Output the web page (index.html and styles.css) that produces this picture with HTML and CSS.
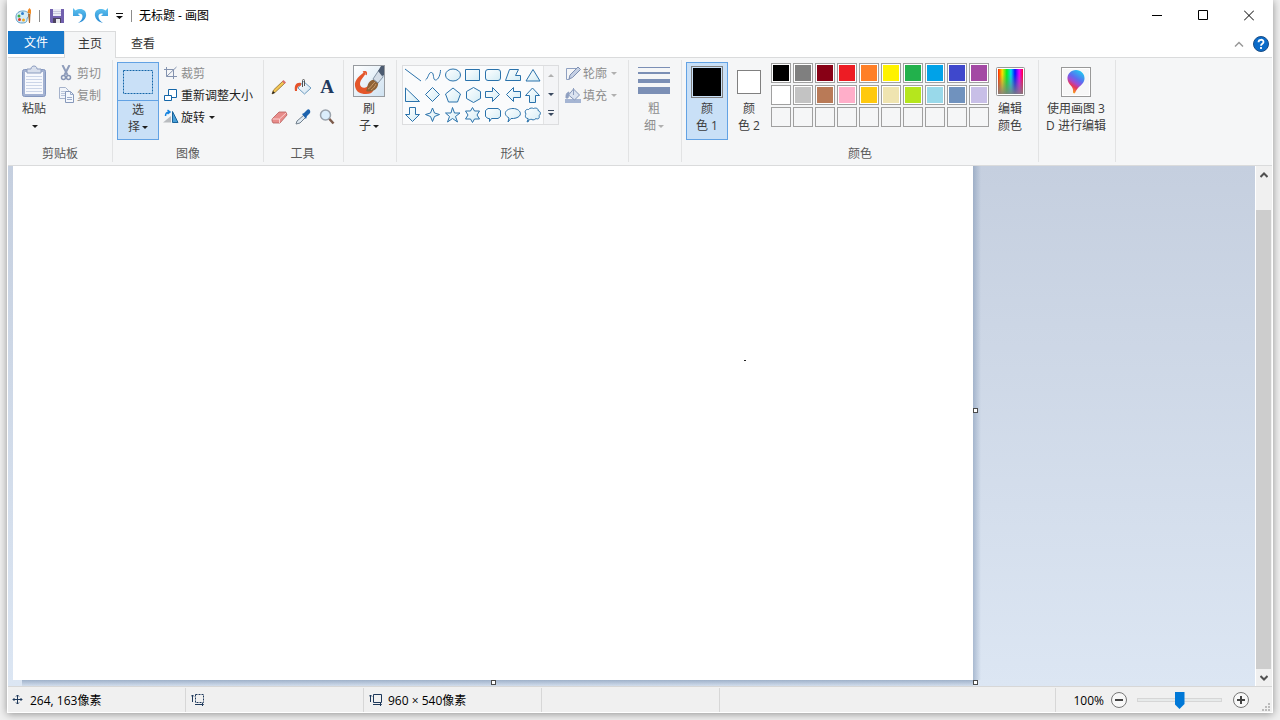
FILE: index.html
```
<!DOCTYPE html>
<html lang="zh">
<head>
    <meta charset="UTF-8">
    <meta name="viewport" content="width=device-width, initial-scale=1.0">
    <title>无标题 - 画图</title>
    <link rel="stylesheet" href="styles.css">
</head>
<body>
    <!-- 公用渐变 -->
    <svg class="defs" aria-hidden="true">
        <defs>
            <linearGradient id="gShape" x1="0" y1="0" x2="1" y2="1"><stop offset="0" stop-color="#fff"/><stop offset="1" stop-color="#d3ecf5"/></linearGradient>
            <linearGradient id="gBlue" x1="0" y1="0" x2="0" y2="1"><stop offset="0" stop-color="#5fc3f0"/><stop offset="1" stop-color="#2487d2"/></linearGradient>
            <linearGradient id="gHue"><stop offset="0" stop-color="#f20"/><stop offset=".17" stop-color="#fd0"/><stop offset=".35" stop-color="#0e2"/><stop offset=".52" stop-color="#0de"/><stop offset=".68" stop-color="#01f"/><stop offset=".85" stop-color="#e0f"/><stop offset="1" stop-color="#f03"/></linearGradient>
            <linearGradient id="gGrey" x1="0" y1="0" x2="0" y2="1"><stop offset=".2" stop-color="#808080" stop-opacity="0"/><stop offset="1" stop-color="#808080" stop-opacity=".9"/></linearGradient>
            <linearGradient id="gDrop" x1=".8" y1="0" x2=".3" y2="1"><stop offset="0" stop-color="#19d3f0"/><stop offset=".4" stop-color="#5b6df0"/><stop offset=".58" stop-color="#a24ad0"/><stop offset=".74" stop-color="#e8365c"/><stop offset="1" stop-color="#fdb515"/></linearGradient>
            <linearGradient id="gPaper" x1="0" y1="0" x2="1" y2="1"><stop offset="0" stop-color="#fff"/><stop offset="1" stop-color="#cfe2f1"/></linearGradient>
        </defs>
    </svg>

    <div class="window">
        <header class="titlebar">
            <div class="quick">
                <svg class="app-icon" width="17" height="16" viewBox="0 0 17 16"><path d="M1 9c0-4 3-6 7-6s6 2 6 4-2 2-2 4 0 4-5 4-6-3-6-6z" fill="#d6ecf8" stroke="#5d9fc6"/><circle cx="4" cy="8" r="1.5" fill="#3fae49"/><circle cx="7.500" cy="5.500" r="1.500" fill="#2f7fd0"/><circle cx="4.500" cy="11.500" r="1.500" fill="#d83b2d"/><circle cx="8.500" cy="12" r="1.500" fill="#f2a81d"/><path d="M12.500 5l.5-3 1.500-2L16 2v4z" fill="#f08a24"/><path d="M13 6h2.500l-.5 9h-1z" fill="#a86a34"/></svg>
                <i class="bar"></i>
                <button class="qbtn save" aria-label="保存"><svg width="14" height="14" viewBox="0 0 14 14"><path d="M0 0h14v14H1l-1-1z" fill="#7160ae"/><path d="M3 0h8v7H3z" fill="#ececf6"/><path d="M3 2.500h8M3 4.500h8" stroke="#c9c9dd"/><path d="M3 9h8v5H3z" fill="#4d4460"/><path d="M6 10h4v4H6z" fill="#e9e9ee"/></svg></button>
                <button class="qbtn" aria-label="撤消"><svg width="14" height="15" viewBox="0 0 14 15"><path d="M0 0l2.500 2.500C8-1 14 2 13 8c-1 4-4 6-8 7 3-2 4.500-4 4.500-6.500 0-3-3-3.500-4.500-2.500l2 2H0z" fill="url(#gBlue)"/></svg></button>
                <button class="qbtn" aria-label="重做"><svg width="14" height="15" viewBox="0 0 14 15"><path d="M14 0l-2.500 2.500C6-1 0 2 1 8c1 4 4 6 8 7-3-2-4.500-4-4.500-6.500 0-3 3-3.500 4.500-2.500L7 8h7z" fill="url(#gBlue)"/></svg></button>
                <button class="qmore" aria-label="自定义快速访问工具栏"><svg width="7" height="6" viewBox="0 0 7 6"><path d="M0 0h7v1H0zM0 3h7L3.500 6z" fill="#111"/></svg></button>
                <i class="bar"></i>
            </div>
            <span class="title">无标题 - 画图</span>
            <div class="win-btns">
                <button aria-label="最小化"><svg width="10" height="11"><path d="M0 5.500h10" stroke="#000"/></svg></button>
                <button aria-label="最大化"><svg width="10" height="11"><path d="M.5.5h9v9h-9z" fill="none" stroke="#000"/></svg></button>
                <button aria-label="关闭"><svg width="10" height="11"><path d="M0 .5l10 10M10 .5l-10 10" stroke="#000"/></svg></button>
            </div>
        </header>

        <nav class="tabs">
            <button class="tab file">文件</button>
            <button class="tab active">主页</button>
            <button class="tab">查看</button>
            <span class="tab-right">
                <button aria-label="最小化功能区"><svg width="10" height="6"><path d="M1 5.500l4-4 4 4" fill="none" stroke="#999" stroke-width="1.500"/></svg></button>
                <button aria-label="帮助"><svg width="16" height="16" viewBox="0 0 16 16"><circle cx="8" cy="8" r="7.500" fill="#0a6bc9" stroke="#1b4d85"/><path d="M5.500 6.200C5.500 3 10.500 3 10.500 6c0 1.800-2.500 1.800-2.500 3.800M8 11v2" fill="none" stroke="#fff" stroke-width="1.800"/></svg></button>
            </span>
        </nav>

        <main class="ribbon">
            <section class="group g-clip">
                <div class="items">
                    <button class="big">
                        <span class="pic"><svg width="26" height="33" viewBox="0 0 26 33"><rect x="1.500" y="4.500" width="23" height="27" rx="2" fill="#a3b2d2" stroke="#8497bf"/><path d="M4 7h18v22H4z" fill="#f7f9fd"/><path d="M5 11.500h16M5 14.500h16M5 17.500h16M5 20.500h16M5 23.500h16M5 26.500h16" stroke="#cbd5e8"/><path d="M6 4h4c0-4 6-4 6 0h4v4H6z" fill="#d8dfec" stroke="#8b9cbf"/></svg></span>
                        <span>粘贴</span><span class="arrow"></span>
                    </button>
                    <div class="col">
                        <button class="small" disabled><svg width="16" height="16" viewBox="0 0 16 16"><path d="M3.500 0l5 10M10.500 0l-5 10" stroke="#8f9dbb" stroke-width="2"/><circle cx="4.500" cy="12.500" r="2" fill="none" stroke="#8795b4" stroke-width="1.500"/><circle cx="9.500" cy="12.500" r="2" fill="none" stroke="#8795b4" stroke-width="1.500"/></svg>剪切</button>
                        <button class="small" disabled><svg width="16" height="16" viewBox="0 0 16 16"><path d="M.5.5h6l3 3v8h-9z" fill="#f2f5fa" stroke="#a5b2cb"/><path d="M2 4.500h4M2 6.500h4M2 8.500h4" stroke="#b9c5da"/><path d="M6.500 4.500h5l3 3v8h-8z" fill="#f5f8fd" stroke="#8799bb"/><path d="M11.500 4.500v3h3M8 10.500h5M8 12.500h5" fill="none" stroke="#9caccb"/></svg>复制</button>
                    </div>
                </div>
                <h2>剪贴板</h2>
            </section>

            <section class="group g-image">
                <div class="items">
                    <button class="big pressed split">
                        <span class="pic"><svg width="32" height="26"><rect x="1.500" y="1.500" width="29" height="23" fill="none" stroke="#1466a8" stroke-dasharray="2 1"/></svg></span>
                        <span>选</span><span>择<i class="arrow"></i></span>
                    </button>
                    <div class="col">
                        <button class="small" disabled><svg width="16" height="16" viewBox="0 0 16 16"><path d="M3.500 2v9.500H14M1 4.500h9.500V14M13.500 2L3.500 11.500" fill="none" stroke="#8493af"/></svg>裁剪</button>
                        <button class="small"><svg width="16" height="16" viewBox="0 0 16 16"><path d="M5.500 2.500h8v8h-8z" fill="#fff" stroke="#1466a8"/><path d="M1.500 8.500h7v5h-7z" fill="#fff" stroke="#1466a8"/></svg>重新调整大小</button>
                        <button class="small"><svg width="16" height="16" viewBox="0 0 16 16"><path d="M0 13.500h8V7z" fill="#b9bcc0"/><path d="M9.500 2.500v11H15z" fill="#4aa0d8" stroke="#19649c"/><path d="M2.500 7c0-3 1-4 4-4M4.500 1l2.500 2-2.500 2" fill="none" stroke="#1784e0" stroke-width="1.500"/></svg>旋转<i class="arrow"></i></button>
                    </div>
                </div>
                <h2>图像</h2>
            </section>

            <section class="group g-tools">
                <div class="tools">
                    <button aria-label="铅笔"><svg width="16" height="16" viewBox="0 0 16 16"><path d="M1 15l1.500-4L12 2l2 2-9.500 9z" fill="#f3c654" stroke="#8b6a2a" stroke-width=".8"/><path d="M11 2.500l1.500-1.500L15 3.500 13.500 5z" fill="#d9706c"/><path d="M1 15l1-3 2 2z" fill="#222"/></svg></button>
                    <button aria-label="用颜色填充"><svg width="18" height="16" viewBox="0 0 18 16"><path d="M9.500 2.500L17 9l-6.500 6L4 9z" fill="url(#gPaper)" stroke="#6d9cc0"/><path d="M8.500 8V1.500c0-1.500 2-1.500 2 0V7" fill="none" stroke="#555"/><path d="M7 4C2.500 3 0 6 1 12h2c0-3.500 1-5 4-5.500z" fill="#e5532b"/></svg></button>
                    <button aria-label="文本" class="letter">A</button>
                    <button aria-label="橡皮擦"><svg width="17" height="16" viewBox="0 0 17 16"><path d="M1 10l7-7h7l1 3-7 8H2l-1-2z" fill="#e88c8a" stroke="#b65f5d" stroke-width=".8"/><path d="M1.500 10h7l7-6.500M8.500 10v4" fill="none" stroke="#fbd0cf"/></svg></button>
                    <button aria-label="颜色选取器"><svg width="16" height="16" viewBox="0 0 16 16"><path d="M1 15l1-3 7-6 2 2-6 6z" fill="#dfe9f2" stroke="#71808d"/><path d="M7 5l2-1 3-3c2-2 4 1 3 3l-3 3-1 3z" fill="#1d63ad"/></svg></button>
                    <button aria-label="放大镜"><svg width="16" height="16" viewBox="0 0 16 16"><path d="M10 9.500l4.500 5" stroke="#7c5b4c" stroke-width="2.500"/><circle cx="6.500" cy="6" r="5" fill="#dbeefb" stroke="#9aa3ac" stroke-width="1.500"/></svg></button>
                </div>
                <h2>工具</h2>
            </section>

            <section class="group g-brush">
                <div class="items">
                    <button class="big">
                        <span class="pic"><svg width="32" height="32" viewBox="0 0 32 32"><rect x=".5" y=".5" width="31" height="31" fill="url(#gPaper)" stroke="#979ba0"/><path d="M13 6C7 10 1 15 2 21c1 6 5 8 11 8 4 0 6-1 7-3l-5-5c-3 3-8 2-8-2 0-5 6-8 6-13z" fill="#e4562a"/><path d="M10 7c3-1 4 0 3 3" fill="none" stroke="#e4562a" stroke-width="1.500"/><path d="M13 26c2-2 0-8 6-11 4-1 7 1 6 5-1 4-5 8-12 6z" fill="#8f6236"/><path d="M15 24c3-1 4-5 7-7M18 25c3-2 4-4 5-6" stroke="#c99a68" fill="none"/><path d="M20 14l6-9 4 3v4l-5 6z" fill="#d4dde7" stroke="#8494a5"/><path d="M25 6l3-5h3v9l-2 1z" fill="#4c5b70"/></svg></span>
                        <span>刷</span><span>子<i class="arrow"></i></span>
                    </button>
                </div>
            </section>

            <section class="group g-shapes">
                <div class="items">
                    <div class="gallery">
                        <div class="shapes">
                            <button aria-label="直线"><svg viewBox="0 0 20 20"><path d="M2 4l16 12"/></svg></button>
                            <button aria-label="曲线"><svg viewBox="0 0 20 20"><path class="open" d="M2.500 15c3-2 3-8 6-7.500 3 .5 1 7.500 4 7.500 3 0 5-6 5-10"/></svg></button>
                            <button aria-label="椭圆"><svg viewBox="0 0 20 20"><ellipse cx="10" cy="10" rx="7.500" ry="6"/></svg></button>
                            <button aria-label="矩形"><svg viewBox="0 0 20 20"><path d="M2.500 4.500h14v11h-14z"/></svg></button>
                            <button aria-label="圆角矩形"><svg viewBox="0 0 20 20"><rect x="2.500" y="4.500" width="15" height="11" rx="2.500"/></svg></button>
                            <button aria-label="多边形"><svg viewBox="0 0 20 20"><path d="M6.500 4.500h9l-3 6h5v5h-15z"/></svg></button>
                            <button aria-label="三角形"><svg viewBox="0 0 20 20"><path d="M10 4.500l7 11.500H3z"/></svg></button>
                            <button aria-label="直角三角形"><svg viewBox="0 0 20 20"><path d="M2.500 3v13.500h14z"/></svg></button>
                            <button aria-label="菱形"><svg viewBox="0 0 20 20"><path d="M9.500 2.500l7 7-7 7-7-7z"/></svg></button>
                            <button aria-label="五边形"><svg viewBox="0 0 20 20"><path d="M10 3l7.500 6-3 8h-9l-3-8z"/></svg></button>
                            <button aria-label="六边形"><svg viewBox="0 0 20 20"><path d="M10.500 2.500l7 4v7l-7 4-7-4v-7z"/></svg></button>
                            <button aria-label="右箭头"><svg viewBox="0 0 20 20"><path d="M2.500 6.500h7v-4l7 7-7 7v-4h-7z"/></svg></button>
                            <button aria-label="左箭头"><svg viewBox="0 0 20 20"><path d="M17.500 6.500h-7v-4l-7 7 7 7v-4h7z"/></svg></button>
                            <button aria-label="上箭头"><svg viewBox="0 0 20 20"><path d="M6.500 17.500v-7h-4l7-7.500 7 7.500h-4v7z"/></svg></button>
                            <button aria-label="下箭头"><svg viewBox="0 0 20 20"><path d="M6.500 2.500v7h-4l7 7 7-7h-4v-7z"/></svg></button>
                            <button aria-label="四角星"><svg viewBox="0 0 20 20"><path d="M9.500 3l2 5 5 1.500-5 2-2 5-2-5-5-2 5-1.500z"/></svg></button>
                            <button aria-label="五角星"><svg viewBox="0 0 20 20"><path d="M9.500 2.500l2 5.500h5.500l-4.500 3.500 2 5.500-5-3.500-5 3.500 2-5.500L2.500 8H8z"/></svg></button>
                            <button aria-label="六角星"><svg viewBox="0 0 20 20"><path d="M9.500 2.500l2 3.500h5l-2.500 4 2.500 4h-5l-2 3.500-2-3.500h-5l2.500-4-2.500-4h5z"/></svg></button>
                            <button aria-label="圆角矩形标注"><svg viewBox="0 0 20 20"><path d="M5 3.500h10l2.500 2v6l-2.500 2H8.500l-2 3v-3H5l-2.500-2v-6z"/></svg></button>
                            <button aria-label="椭圆形标注"><svg viewBox="0 0 20 20"><path d="M6 13C-1 9 3 3.500 10 3.500s11 7 3 9.500c-2 .6-3 .5-5 .5l-3 3.500z"/></svg></button>
                            <button aria-label="云形标注"><svg viewBox="0 0 20 20"><path d="M5 13.500c-3 0-3-3-2-4.500-2-3 0-5 2.500-4.500 1.500-2 4-1.500 5-1 2.500-1 5 0 4.500 2 3 1 3 4 1 5 1 3-1 4-3 3-2 2-4 1.500-5 .5-1 1-2 1-3-.5zM5 14.500l-1 2.500 2-1z"/></svg></button>
                        </div>
                        <div class="scroller">
                            <button aria-label="上一行" disabled><i class="arrow up"></i></button>
                            <button aria-label="下一行"><i class="arrow"></i></button>
                            <button aria-label="更多形状"><i class="arrow more"></i></button>
                        </div>
                    </div>
                    <div class="col">
                        <button class="small" disabled><svg width="16" height="16" viewBox="0 0 16 16"><path d="M11 3.500H1.500v11h3" fill="none" stroke="#8fa0c0"/><path d="M4 14l1-4 8-8 2.500 2.500-8 8z" fill="#c5d0e4" stroke="#7d8fb2"/></svg><span class="txt">轮廓</span><i class="arrow"></i></button>
                        <button class="small" disabled><svg width="16" height="16" viewBox="0 0 16 16"><path d="M0 12h16v4H0z" fill="#a5b5d3"/><path d="M8.500 2l6 6-5 5-6-5z" fill="#dbe3f0" stroke="#8395b8"/><path d="M8.500 8V1M4 5c-3 1-3 3-3 6h2z" fill="#8e9fc0" stroke="#8e9fc0"/></svg><span class="txt">填充</span><i class="arrow"></i></button>
                    </div>
                </div>
                <h2>形状</h2>
            </section>

            <section class="group g-size">
                <div class="items">
                    <button class="big" disabled>
                        <span class="pic"><svg width="32" height="32"><path d="M0 1h32v1H0zM0 6h32v2H0zM0 13h32v4H0zM0 21h32v7H0z" fill="#7b8fb5"/></svg></span>
                        <span>粗</span><span>细<i class="arrow"></i></span>
                    </button>
                </div>
            </section>

            <section class="group g-colors">
                <div class="items">
                    <button class="big pressed">
                        <span class="pic"><i class="swatch primary"></i></span>
                        <span>颜</span><span>色 1</span>
                    </button>
                    <button class="big">
                        <span class="pic"><i class="swatch secondary"></i></span>
                        <span>颜</span><span>色 2</span>
                    </button>
                    <div class="palette">
                        <button class="black" aria-label="黑色"></button>
                        <button class="grey50" aria-label="灰色-50%"></button>
                        <button class="darkred" aria-label="深红色"></button>
                        <button class="red" aria-label="红色"></button>
                        <button class="orange" aria-label="橙色"></button>
                        <button class="yellow" aria-label="黄色"></button>
                        <button class="green" aria-label="绿色"></button>
                        <button class="turquoise" aria-label="青绿"></button>
                        <button class="indigo" aria-label="靛青"></button>
                        <button class="purple" aria-label="紫色"></button>
                        <button class="white" aria-label="白色"></button>
                        <button class="grey25" aria-label="灰色-25%"></button>
                        <button class="brown" aria-label="褐色"></button>
                        <button class="rose" aria-label="玫瑰色"></button>
                        <button class="gold" aria-label="金色"></button>
                        <button class="lightyellow" aria-label="浅黄色"></button>
                        <button class="lime" aria-label="酸橙色"></button>
                        <button class="lightblue" aria-label="淡青绿色"></button>
                        <button class="bluegrey" aria-label="蓝灰色"></button>
                        <button class="lavender" aria-label="淡紫色"></button>
                        <button class="empty" aria-label="自定义 1"></button>
                        <button class="empty" aria-label="自定义 2"></button>
                        <button class="empty" aria-label="自定义 3"></button>
                        <button class="empty" aria-label="自定义 4"></button>
                        <button class="empty" aria-label="自定义 5"></button>
                        <button class="empty" aria-label="自定义 6"></button>
                        <button class="empty" aria-label="自定义 7"></button>
                        <button class="empty" aria-label="自定义 8"></button>
                        <button class="empty" aria-label="自定义 9"></button>
                        <button class="empty" aria-label="自定义 10"></button>
                    </div>
                    <button class="big">
                        <span class="pic"><svg width="29" height="30"><rect x=".5" y=".5" width="28" height="28" rx="1" fill="#fff" stroke="#979797"/><path d="M2 2h25v25H2z" fill="url(#gHue)"/><path d="M2 2h25v25H2z" fill="url(#gGrey)"/></svg></span>
                        <span>编辑</span><span>颜色</span>
                    </button>
                </div>
                <h2>颜色</h2>
            </section>

            <section class="group g-3d">
                <div class="items">
                    <button class="big">
                        <span class="pic"><svg width="30" height="30"><rect x=".5" y=".5" width="29" height="29" fill="#f7f7f7" stroke="#999"/><path d="M1.500 1.500h27v27h-27z" fill="none" stroke="#fff"/><path d="M15 3c5 0 9 4 8.500 9-.5 6-7 7-9.500 14-1 1-2 0-2-1 1-6-5-7-5.500-13C6 7 10 3 15 3z" fill="url(#gDrop)"/></svg></span>
                        <span>使用画图 3</span><span>D 进行编辑</span>
                    </button>
                </div>
            </section>
        </main>

        <div class="workspace">
            <div class="viewport">
                <div class="sheet">
                    <i class="dot"></i>
                    <i class="handle right"></i>
                    <i class="handle bottom"></i>
                    <i class="handle corner"></i>
                </div>
            </div>
            <div class="scrollbar">
                <button aria-label="向上滚动"><svg width="8" height="6"><path d="M.5 5L4 1.500 7.500 5" fill="none" stroke="#505050" stroke-width="2"/></svg></button>
                <div class="rail"><div class="thumb"></div></div>
                <button aria-label="向下滚动"><svg width="8" height="6"><path d="M.5 1L4 4.500 7.500 1" fill="none" stroke="#505050" stroke-width="2"/></svg></button>
            </div>
        </div>

        <footer class="status">
            <div class="cell"><svg width="12" height="12" viewBox="0 0 12 12"><path d="M5.500 1v9M1 5.500h9M4 2.500L5.500 1 7 2.500M4 8.500L5.500 10 7 8.500M2.500 4L1 5.500 2.500 7M8.500 4L10 5.500 8.500 7" fill="none" stroke="#1e395b"/></svg>264, 163像素</div>
            <div class="cell"><svg width="14" height="12" viewBox="0 0 14 12"><path d="M4.500.5h8v8h-8z" fill="none" stroke="#1e395b" stroke-dasharray="2 1"/><path d="M1.500 8V1M0 2.500L1.500 1 3 2.500M4 10.500h8M11 9l1.500 1.500L11 12" fill="none" stroke="#1e395b"/></svg></div>
            <div class="cell"><svg width="14" height="12" viewBox="0 0 14 12"><path d="M4.500.5h8v8h-8z" fill="none" stroke="#1e395b"/><path d="M1.500 8V1M0 2.500L1.500 1 3 2.500M4 10.500h8M11 9l1.500 1.500L11 12" fill="none" stroke="#1e395b"/></svg>960 × 540像素</div>
            <div class="cell"></div>
            <div class="zoom">
                <label for="zoom">100%</label>
                <button aria-label="缩小"><svg width="18" height="18"><circle cx="9" cy="9" r="7.500" fill="#f8f8f8" stroke="#777"/><path d="M5 9h8" stroke="#444" stroke-width="2"/></svg></button>
                <input type="range" id="zoom" min="0" max="100" value="50">
                <button aria-label="放大"><svg width="18" height="18"><circle cx="9" cy="9" r="7.500" fill="#f8f8f8" stroke="#777"/><path d="M5 9h8M9 5v8" stroke="#444" stroke-width="2"/></svg></button>
                <svg class="grip" width="8" height="8"><path d="M6 0h2v2H6zM3 3h2v2H3zM6 3h2v2H6zM0 6h2v2H0zM3 6h2v2H3zM6 6h2v2H6z" fill="#bbb"/></svg>
            </div>
        </footer>
    </div>
</body>
</html>
```
FILE: styles.css
```
* {
    box-sizing: border-box;
}
body {
    margin: 0;
    height: 100vh;
    padding: 0 7px 7px;
    background: #efefef;
    font-family: "Open Sans", "Noto Sans CJK SC", sans-serif;
    font-size: 12px;
    line-height: 17px;
    color: #000;
    overflow: hidden;
}
button {
    font: inherit;
    color: inherit;
    background: none;
    border: 0;
    padding: 0;
    margin: 0;
}
svg {
    display: block;
    flex-shrink: 0;
}
.defs {
    position: absolute;
    width: 0;
    height: 0;
}
.window {
    height: 100%;
    display: flex;
    flex-direction: column;
    background: #fff;
    border: 1px solid #fff;
    border-top: 0;
    box-shadow: 0 1px 8px rgba(0, 0, 0, 0.4);
}

/* 标题栏 */
.titlebar {
    height: 31px;
    display: flex;
    align-items: center;
}
.quick {
    display: flex;
    align-items: center;
    gap: 7px;
    padding-left: 7px;
}
.bar {
    width: 1px;
    height: 12px;
    background: #8c8c8c;
}
.save {
    margin: 0 2px 0 3px;
}
.qmore {
    margin: 0 1px;
}
.title {
    flex: 1;
    padding-left: 7px;
}
.win-btns {
    display: flex;
    height: 100%;
}
.win-btns button {
    width: 46px;
    display: flex;
    align-items: center;
    justify-content: center;
}

/* 选项卡 */
.tabs {
    height: 27px;
    display: flex;
    align-items: flex-start;
    border-bottom: 1px solid #dadbdc;
}
.tab {
    height: 24px;
    padding: 0 15px;
    color: #333;
}
.tab.file {
    height: 23px;
    padding: 0 16px;
    background: #1979ca;
    color: #fff;
}
.tab.active {
    height: 27px;
    padding: 0 13px 3px;
    background: #f5f6f7;
    border: 1px solid #dadbdc;
    border-width: 1px 1px 0;
}
.tab-right {
    margin-left: auto;
    height: 26px;
    padding-right: 3px;
    display: flex;
    align-items: center;
    gap: 9px;
}

/* 功能区 */
.ribbon {
    height: 108px;
    display: flex;
    padding: 2px 0 3px;
    background: #f5f6f7;
    border-bottom: 1px solid #dadbdc;
    color: #3c3c3c;
}
.group {
    display: flex;
    flex-direction: column;
    justify-content: space-between;
    padding: 2px 4px 0;
    border-right: 1px solid #e2e3e4;
}
.g-clip { width: 105px; }
.g-image { width: 151px; }
.g-tools { width: 80px; padding: 2px 5px 0 3px; }
.g-brush { width: 53px; }
.g-shapes { width: 232px; }
.g-size { width: 53px; }
.g-colors { width: 357px; }
.g-3d { width: 77px; }
.group h2 {
    margin: 0;
    font-size: 12px;
    font-weight: normal;
    line-height: 16px;
    text-align: center;
    color: #5a5a5a;
}
.items {
    display: flex;
    align-items: flex-start;
    gap: 2px;
}
.g-colors .items {
    gap: 0;
}
.col {
    display: flex;
    flex-direction: column;
}
.big {
    min-width: 42px;
    height: 78px;
    border: 1px solid transparent;
    display: flex;
    flex-direction: column;
    align-items: center;
    white-space: nowrap;
}
.big .pic {
    height: 37px;
    display: flex;
    align-items: center;
}
.big > .arrow {
    margin-top: 8px;
}
.g-clip .items {
    gap: 1px;
}
.g-clip .big {
    width: 44px;
}
.pressed {
    background: #c9e0f7;
    border-color: #62a2e4;
}
.split .pic {
    height: 38px;
    align-self: stretch;
    justify-content: center;
    border-bottom: 1px solid #62a2e4;
}
.g-brush .items,
.g-size .items,
.g-3d .items {
    justify-content: center;
    padding-right: 2px;
}
.g-brush .pic svg {
    margin-bottom: 2px;
}
.small {
    height: 22px;
    padding: 0 2px;
    display: flex;
    align-items: center;
    gap: 2px;
    color: #1e1e1e;
    white-space: nowrap;
}
button:disabled {
    color: #8d8d8d;
}
.arrow {
    display: inline-block;
    border: 3px solid transparent;
    border-top-color: #1e1e1e;
    border-bottom: 0;
    margin-left: 2px;
    vertical-align: middle;
}
button:disabled .arrow {
    border-top-color: #b0b0b0;
}
.tools {
    display: grid;
    grid-template-columns: repeat(3, 24px);
    grid-auto-rows: 30px;
    padding-top: 10px;
}
.tools button {
    display: flex;
    align-items: center;
    justify-content: center;
}
.tools .letter {
    font: bold 19px "Liberation Serif", serif;
    color: #1f3a5f;
}

/* 形状库 */
.gallery {
    display: flex;
    margin: 3px 1px 0;
    border: 1px solid #dcdddf;
    background: #fafbfc;
}
.shapes {
    display: grid;
    grid-template-columns: repeat(7, 20px);
    grid-auto-rows: 18px;
    row-gap: 2px;
    height: 58px;
}
.shapes button {
    display: flex;
    align-items: center;
}
.shapes svg {
    width: 20px;
    height: 20px;
    fill: url(#gShape);
    stroke: #2a72ab;
    stroke-width: 1;
}
.shapes .open {
    fill: none;
}
.scroller {
    width: 15px;
    display: grid;
    grid-template-rows: repeat(3, 1fr);
    background: #f3f4f6;
    border-left: 1px solid #e2e3e4;
}
.scroller button {
    display: flex;
    align-items: center;
    justify-content: center;
}
.scroller .arrow {
    margin: 0;
    border-top-color: #3b4a60;
}
.scroller .arrow.up {
    transform: rotate(180deg);
}
.arrow.more {
    position: relative;
}
.arrow.more::before {
    content: "";
    position: absolute;
    left: -3px;
    top: -6px;
    width: 6px;
    height: 1px;
    background: #3b4a60;
}
.g-shapes .items {
    gap: 3px;
}

/* 颜色 */
.swatch {
    border: 1px solid #808080;
}
.primary {
    width: 32px;
    height: 32px;
    background: #000;
    box-shadow: inset 0 0 0 1px #c9e0f7;
}
.secondary {
    width: 24px;
    height: 24px;
    background: #fff;
}
.palette {
    display: grid;
    grid-template-columns: repeat(10, 20px);
    grid-auto-rows: 20px;
    gap: 2px;
    margin: 1px 0 0 1px;
}
.palette button {
    border: 1px solid #a0a0a0;
    box-shadow: inset 0 0 0 1px #fff;
}
.palette .empty {
    box-shadow: none;
}
.black { background: #000; }
.grey50 { background: #7f7f7f; }
.darkred { background: #880015; }
.red { background: #ed1c24; }
.orange { background: #ff7f27; }
.yellow { background: #fff200; }
.green { background: #22b14c; }
.turquoise { background: #00a2e8; }
.indigo { background: #3f48cc; }
.purple { background: #a349a4; }
.white { background: #fff; }
.grey25 { background: #c3c3c3; }
.brown { background: #b97a57; }
.rose { background: #ffaec9; }
.gold { background: #ffc90e; }
.lightyellow { background: #efe4b0; }
.lime { background: #b5e61d; }
.lightblue { background: #99d9ea; }
.bluegrey { background: #7092be; }
.lavender { background: #c8bfe7; }

/* 画布 */
.workspace {
    flex: 1;
    min-height: 0;
    display: flex;
}
.viewport {
    flex: 1;
    min-width: 0;
    padding: 0 0 6px 5px;
    background: linear-gradient(#c5cfdf, #dce6f3);
    overflow: hidden;
}
.sheet {
    position: relative;
    width: 960px;
    height: 100%;
    background: #fff;
}
.sheet::before,
.sheet::after {
    content: "";
    position: absolute;
}
.sheet::before {
    left: 100%;
    top: 0;
    bottom: 0;
    width: 8px;
    background: linear-gradient(to right, rgba(120, 143, 175, 0.5), rgba(120, 143, 175, 0));
}
.sheet::after {
    top: 100%;
    left: 9px;
    right: 0;
    height: 6px;
    background: linear-gradient(rgba(120, 143, 175, 0.6), rgba(120, 143, 175, 0.1));
}
.dot {
    position: absolute;
    left: 731px;
    top: 194px;
    width: 2px;
    height: 1px;
    background: #222;
}
.handle {
    position: absolute;
    z-index: 1;
    width: 5px;
    height: 5px;
    background: #fff;
    border: 1px solid #4a4a4a;
}
.handle.right {
    left: 100%;
    top: 242px;
}
.handle.bottom {
    left: 478px;
    top: 100%;
}
.handle.corner {
    left: 100%;
    top: 100%;
}
.scrollbar {
    width: 17px;
    display: flex;
    flex-direction: column;
    background: #f0f0f0;
    border-left: 1px solid #fff;
}
.scrollbar button {
    height: 17px;
    padding-right: 1px;
    display: flex;
    align-items: center;
    justify-content: center;
}
.rail {
    flex: 1;
    padding: 27px 1px 0 0;
}
.thumb {
    height: 100%;
    background: #cdcdcd;
}

/* 状态栏 */
.status {
    height: 26px;
    display: flex;
    padding: 1px 0 0;
    background: #f0f0f0;
    border-top: 1px solid #d7d7d7;
}
.cell {
    width: 178px;
    display: flex;
    align-items: center;
    gap: 6px;
    padding-left: 4px;
    border-right: 1px solid #d7d7d7;
}
.cell + .cell {
    padding-left: 5px;
    gap: 5px;
}
.zoom {
    margin-left: auto;
    display: flex;
    align-items: center;
    gap: 6px;
    padding-left: 17px;
    border-left: 1px solid #d7d7d7;
}
.zoom input {
    appearance: none;
    width: 85px;
    height: 18px;
    margin: 0 4px 0 3px;
    background: none;
}
.zoom input::-webkit-slider-runnable-track {
    height: 4px;
    background: #e7eaea;
    border: 1px solid #d6d6d6;
}
.zoom input::-webkit-slider-thumb {
    appearance: none;
    width: 10px;
    height: 17px;
    margin-top: -7px;
    background: #0078d7;
    clip-path: polygon(0 0, 100% 0, 100% 70%, 50% 100%, 0 70%);
}
.grip {
    align-self: flex-end;
    margin: 0 2px 1px 6px;
}
```
